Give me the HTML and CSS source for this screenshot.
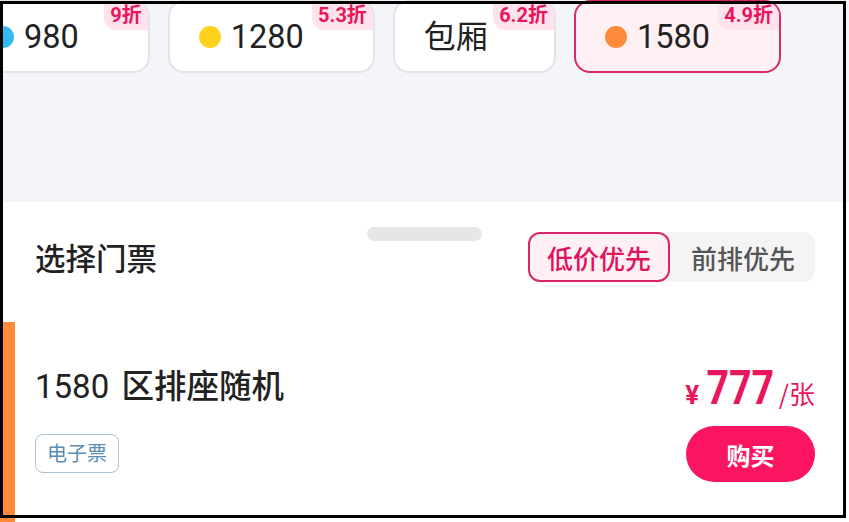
FILE: index.html
```html
<!DOCTYPE html>
<html lang="zh-CN">
<head>
<meta charset="utf-8">
<title>选择门票</title>
<link rel="stylesheet" href="styles.css">
</head>
<body>
<div class="page">
  <div class="top">
    <div class="chips">
      <div class="chip"><span class="dot blue"></span><span class="label">980</span><span class="badge">9折</span></div>
      <div class="chip"><span class="dot yellow"></span><span class="label">1280</span><span class="badge">5.3折</span></div>
      <div class="chip chip-text"><span class="label">包厢</span><span class="badge">6.2折</span></div>
      <div class="chip selected"><span class="dot orange"></span><span class="label">1580</span><span class="badge">4.9折</span></div>
    </div>
  </div>
  <div class="sheet">
    <div class="handle"></div>
    <div class="sheet-head">
      <h2 class="sheet-title">选择门票</h2>
      <div class="toggle">
        <span class="seg active">低价优先</span>
        <span class="seg">前排优先</span>
      </div>
    </div>
    <div class="ticket">
      <div class="ticket-info">
        <div class="ticket-name"><span class="zone">1580</span> 区排座随机</div>
        <span class="tag">电子票</span>
      </div>
      <div class="ticket-buy">
        <div class="price"><span class="yen">¥</span><span class="num">777</span><span class="unit">/张</span></div>
        <button class="buy">购买</button>
      </div>
    </div>
  </div>
  <div class="frame"></div>
</div>
</body>
</html>
```

FILE: styles.css
```css
* { box-sizing: border-box; }
html, body { margin: 0; padding: 0; }
body {
  width: 849px;
  height: 522px;
  overflow: hidden;
  background: #ffffff;
  font-family: Roboto, "Noto Sans CJK SC", "Noto Sans", sans-serif;
  color: #222222;
}
.page { position: relative; width: 849px; height: 522px; overflow: hidden; }

.top {
  height: 202px;
  background: #f4f5f9;
}
.chips {
  display: flex;
  gap: 18px;
  margin-left: -39px;
  align-items: flex-start;
}
.chip {
  position: relative;
  height: 73px;
  display: flex;
  align-items: center;
  gap: 10px;
  padding: 0 69px 0 29px;
  background: #ffffff;
  border: 2px solid #e4e4e8;
  border-radius: 16px;
  overflow: hidden;
  flex: none;
}
.chip.chip-text { padding-right: 66px; }
.chip .label {
  font-size: 32.5px;
  line-height: 40px;
  color: #222222;
  font-weight: 400;
}
.chip-text .label { font-size: 32px; }
.chip.selected {
  background: #fff0f4;
  border-color: #d82a64;
}
.dot {
  width: 22px;
  height: 22px;
  border-radius: 50%;
  flex: none;
}
.dot.blue { background: #33b8f0; }
.dot.yellow { background: #ffd21e; }
.dot.orange { background: #ff8a3a; }
.badge {
  position: absolute;
  top: 0;
  right: 0;
  height: 28px;
  padding: 0 6px;
  font-size: 20px;
  line-height: 26px;
  font-weight: 700;
  color: #e8175d;
  background: #ffe2eb;
  border-bottom-left-radius: 12px;
}

.sheet {
  position: relative;
  background: #ffffff;
  padding: 0 34px 0 35px;
  height: 320px;
}
.handle {
  position: absolute;
  top: 25px;
  left: 50%;
  margin-left: -58px;
  width: 115px;
  height: 14px;
  border-radius: 7px;
  background: #e6e6e8;
}
.sheet-head {
  padding-top: 30px;
  display: flex;
  justify-content: space-between;
  align-items: center;
}
.sheet-title {
  margin: 0;
  font-size: 30.5px;
  font-weight: 500;
  color: #222222;
  font-family: "Noto Sans CJK SC", sans-serif;
}
.toggle {
  display: flex;
  height: 50px;
  background: #f4f4f5;
  border-radius: 12px;
}
.seg {
  display: flex;
  align-items: center;
  font-family: "Noto Sans CJK SC", sans-serif;
  font-size: 26px;
  font-weight: 500;
  color: #555555;
  padding: 0 20px 0 21px;
}
.seg.active {
  padding: 0 17px;
  border: 2px solid #d8266a;
  border-radius: 12px;
  background: #fff0f4;
  color: #e0135c;
}

.ticket {
  margin: 40px -34px 0 -35px;
  padding: 42px 34px 40px 20px;
  border-left: 15px solid #ff8a3a;
  display: flex;
  justify-content: space-between;
  align-items: flex-start;
}
.ticket-info {
  display: flex;
  flex-direction: column;
  align-items: flex-start;
}
.ticket-name {
  font-family: "Noto Sans CJK SC", sans-serif;
  font-size: 32.5px;
  line-height: 40px;
  font-weight: 500;
  color: #222222;
  white-space: pre;
}
.zone {
  font-family: Roboto, sans-serif;
  font-weight: 400;
  font-size: 33px;
  margin-right: 5px;
}
.tag {
  margin-top: 27px;
  height: 39px;
  line-height: 36px;
  padding: 0 11px;
  border: 1px solid #a9c3d8;
  border-radius: 8px;
  font-family: "Noto Sans CJK SC", sans-serif;
  font-size: 20px;
  color: #5b8db5;
}
.ticket-buy {
  display: flex;
  flex-direction: column;
  align-items: flex-end;
}
.price {
  height: 44px;
  display: flex;
  align-items: baseline;
  color: #e8175d;
  line-height: 44px;
  margin-top: 2px;
}
.yen {
  font-size: 26px;
  font-weight: 700;
  margin-right: 6px;
}
.num {
  display: inline-block;
  font-size: 48px;
  font-weight: 700;
  transform: scaleX(0.82);
  margin: 0 -5px 0 -6px;
}
.unit {
  font-family: "Noto Sans CJK SC", sans-serif;
  font-size: 26px;
  margin-left: 2px;
}
.buy {
  margin-top: 16px;
  width: 129px;
  height: 56px;
  border: none;
  border-radius: 28px;
  background: #fb1561;
  color: #ffffff;
  font-family: "Noto Sans CJK SC", sans-serif;
  font-size: 24px;
  font-weight: 700;
  padding: 0;
}

.frame {
  position: absolute;
  left: 0;
  top: 1px;
  width: 846px;
  height: 517px;
  border: 3px solid #000000;
  pointer-events: none;
}
```
